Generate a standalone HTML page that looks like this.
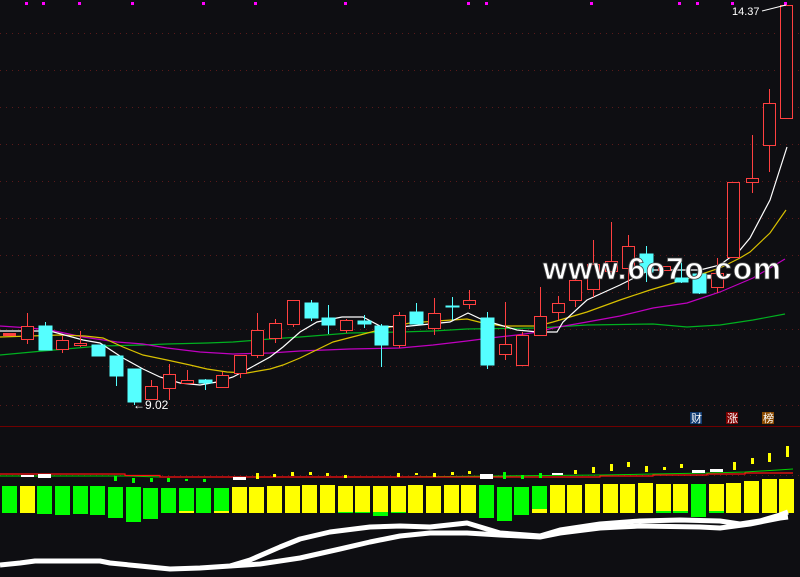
<!DOCTYPE html>
<html><head><meta charset="utf-8"><style>
html,body{margin:0;padding:0;background:#0e0e12;width:800px;height:577px;overflow:hidden}
svg{display:block}
</style></head><body>
<svg width="800" height="577" viewBox="0 0 800 577" xmlns="http://www.w3.org/2000/svg" font-family="Liberation Sans, sans-serif">
<rect width="800" height="577" fill="#0e0e12"/>
<g stroke="#5a1a1a" stroke-width="1" stroke-dasharray="1,5">
<line x1="0" y1="33.5" x2="800" y2="33.5"/><line x1="0" y1="70.5" x2="800" y2="70.5"/>
<line x1="0" y1="107.5" x2="800" y2="107.5"/><line x1="0" y1="144.5" x2="800" y2="144.5"/>
<line x1="0" y1="181.5" x2="800" y2="181.5"/><line x1="0" y1="218.5" x2="800" y2="218.5"/>
<line x1="0" y1="255.5" x2="800" y2="255.5"/><line x1="0" y1="292.5" x2="800" y2="292.5"/>
<line x1="0" y1="329.5" x2="800" y2="329.5"/><line x1="0" y1="366.5" x2="800" y2="366.5"/>
<line x1="0" y1="405.5" x2="800" y2="405.5"/><line x1="0" y1="475.5" x2="800" y2="475.5"/>
</g>
<g fill="#ff00ff">
<rect x="25" y="2" width="3" height="3"/><rect x="42" y="2" width="3" height="3"/><rect x="78" y="2" width="3" height="3"/><rect x="131" y="2" width="3" height="3"/><rect x="202" y="2" width="3" height="3"/><rect x="254" y="2" width="3" height="3"/><rect x="344" y="2" width="3" height="3"/><rect x="467" y="2" width="3" height="3"/><rect x="485" y="2" width="3" height="3"/><rect x="590" y="2" width="3" height="3"/><rect x="678" y="2" width="3" height="3"/><rect x="696" y="2" width="3" height="3"/><rect x="731" y="2" width="3" height="3"/><rect x="784" y="2" width="3" height="3"/>
</g>
<g fill="none" stroke-width="1.2">
<polyline stroke="#00b020" points="0,355 43,351 77,348 100,346 143,345 167,344 207,343 233,342 270,339 300,337 350,333 400,332 433,331 467,329 538,328 587,325 653,324 687,327 720,325 753,320 785,314"/>
<polyline stroke="#c000c0" points="0,326 30,328 50,330 83,337 117,342 143,344 167,348 200,352 233,354 270,353 300,351 350,349 400,348 433,345 467,341 490,338 517,335 538,332 553,328 587,322 620,316 653,308 687,303 720,292 753,278 785,259"/>
<polyline stroke="#d8c000" points="0,337 30,336 60,335 85,336 103,338 123,347 143,355 167,360 190,365 207,369 227,372 247,373 270,369 283,365 300,358 333,342 360,335 390,327 410,323 437,321 467,319 483,323 503,326 538,326 553,322 587,312 620,300 650,290 690,278 720,268 740,258 750,252 770,233 786,210"/>
<polyline stroke="#ffffff" points="0,331 50,331 83,340 100,343 123,358 143,369 160,377 180,383 200,385 217,382 233,377 250,368 270,357 283,347 300,332 317,322 342,317 363,317 380,326 400,327 420,325 450,322 468,313 483,320 500,325 517,330 538,332 557,332 563,322 587,300 620,285 650,270 700,270 720,265 740,250 750,238 770,200 787,147"/>
</g>
<g stroke="#ff4040" fill="#0e0e12" stroke-width="1.3" shape-rendering="crispEdges">
<rect x="3.5" y="333.5" width="12" height="2" fill="#ff4040"/>
<line x1="27.5" y1="313" x2="27.5" y2="344"/><rect x="21.5" y="326.5" width="12" height="13"/>
<line x1="62.5" y1="336" x2="62.5" y2="353"/><rect x="56.5" y="340.5" width="12" height="9"/>
<line x1="80.5" y1="331" x2="80.5" y2="347"/><rect x="74.5" y="343.5" width="12" height="2"/>
<line x1="151.5" y1="380" x2="151.5" y2="399"/><rect x="145.5" y="386.5" width="12" height="13"/>
<line x1="169.5" y1="364" x2="169.5" y2="400"/><rect x="163.5" y="374.5" width="12" height="14"/>
<line x1="187.5" y1="370" x2="187.5" y2="383"/><rect x="181.5" y="380.5" width="12" height="3"/>
<line x1="222.5" y1="372" x2="222.5" y2="387"/><rect x="216.5" y="375.5" width="12" height="12"/>
<line x1="240.5" y1="355" x2="240.5" y2="378"/><rect x="234.5" y="355.5" width="12" height="18"/>
<line x1="257.5" y1="313" x2="257.5" y2="358"/><rect x="251.5" y="330.5" width="12" height="25"/>
<line x1="275.5" y1="319" x2="275.5" y2="343"/><rect x="269.5" y="323.5" width="12" height="15"/>
<line x1="293.5" y1="300" x2="293.5" y2="327"/><rect x="287.5" y="300.5" width="12" height="24"/>
<line x1="346.5" y1="319" x2="346.5" y2="333"/><rect x="340.5" y="320.5" width="12" height="10"/>
<line x1="399.5" y1="312" x2="399.5" y2="348"/><rect x="393.5" y="315.5" width="12" height="30"/>
<line x1="434.5" y1="298" x2="434.5" y2="335"/><rect x="428.5" y="313.5" width="12" height="15"/>
<line x1="469.5" y1="290" x2="469.5" y2="309"/><rect x="463.5" y="300.5" width="12" height="4"/>
<line x1="505.5" y1="302" x2="505.5" y2="360"/><rect x="499.5" y="344.5" width="12" height="10"/>
<line x1="522.5" y1="332" x2="522.5" y2="365"/><rect x="516.5" y="335.5" width="12" height="30"/>
<line x1="540.5" y1="287" x2="540.5" y2="335"/><rect x="534.5" y="316.5" width="12" height="19"/>
<line x1="558.5" y1="296" x2="558.5" y2="320"/><rect x="552.5" y="303.5" width="12" height="9"/>
<line x1="575.5" y1="273" x2="575.5" y2="307"/><rect x="569.5" y="280.5" width="12" height="20"/>
<line x1="593.5" y1="240" x2="593.5" y2="297"/><rect x="587.5" y="264.5" width="12" height="25"/>
<line x1="611.5" y1="222" x2="611.5" y2="275"/><rect x="605.5" y="261.5" width="12" height="10"/>
<line x1="628.5" y1="235" x2="628.5" y2="290"/><rect x="622.5" y="246.5" width="12" height="22"/>
<rect x="658.5" y="266.5" width="12" height="4"/>
<line x1="717.5" y1="258" x2="717.5" y2="293"/><rect x="711.5" y="273.5" width="12" height="14"/>
<rect x="727.5" y="182.5" width="12" height="75"/>
<line x1="752.5" y1="135" x2="752.5" y2="193"/><rect x="746.5" y="178.5" width="12" height="4"/>
<line x1="769.5" y1="89" x2="769.5" y2="172"/><rect x="763.5" y="103.5" width="12" height="42"/>
<rect x="780.5" y="5.5" width="12" height="113"/>
</g>
<g stroke="#55ffff" fill="#55ffff" stroke-width="1">
<line x1="45.5" y1="322" x2="45.5" y2="350"/><rect x="39" y="326" width="13" height="24"/>
<rect x="92" y="345" width="13" height="11"/>
<line x1="116.5" y1="356" x2="116.5" y2="386"/><rect x="110" y="356" width="13" height="20"/>
<line x1="134.5" y1="369" x2="134.5" y2="405"/><rect x="128" y="369" width="13" height="33"/>
<line x1="205.5" y1="379" x2="205.5" y2="390"/><rect x="199" y="380" width="13" height="3"/>
<line x1="311.5" y1="300" x2="311.5" y2="321"/><rect x="305" y="303" width="13" height="15"/>
<line x1="328.5" y1="305" x2="328.5" y2="334"/><rect x="322" y="318" width="13" height="7"/>
<line x1="364.5" y1="315" x2="364.5" y2="328"/><rect x="358" y="321" width="13" height="3"/>
<line x1="381.5" y1="324" x2="381.5" y2="367"/><rect x="375" y="326" width="13" height="19"/>
<line x1="416.5" y1="303" x2="416.5" y2="324"/><rect x="410" y="312" width="13" height="12"/>
<line x1="452.5" y1="297" x2="452.5" y2="320"/><rect x="446" y="306" width="13" height="1"/>
<line x1="487.5" y1="312" x2="487.5" y2="369"/><rect x="481" y="318" width="13" height="47"/>
<line x1="646.5" y1="246" x2="646.5" y2="282"/><rect x="640" y="254" width="13" height="18"/>
<line x1="681.5" y1="258" x2="681.5" y2="283"/><rect x="675" y="278" width="13" height="4"/>
<line x1="699.5" y1="274" x2="699.5" y2="294"/><rect x="693" y="274" width="13" height="19"/>
</g>
<text x="732" y="15" fill="#ffffff" font-size="11">14.37</text>
<line x1="762" y1="11" x2="786" y2="5" stroke="#fff" stroke-width="1"/>
<text x="133" y="409" fill="#ffffff" font-size="12">←9.02</text>
<text x="543" y="279" fill="#ffffff" font-size="31" font-weight="bold" letter-spacing="1.2" stroke="#444" stroke-width="0.8">www.6o7o.com</text>
<line x1="0" y1="426.5" x2="800" y2="426.5" stroke="#700000"/>
<rect x="690" y="412" width="12" height="12" fill="#103a70"/><text x="691" y="422" fill="#fff" font-size="11" font-family="Noto Sans CJK SC, sans-serif">财</text>
<rect x="726" y="412" width="12" height="12" fill="#800000"/><text x="727" y="422" fill="#fff" font-size="11" font-family="Noto Sans CJK SC, sans-serif">涨</text>
<rect x="762" y="412" width="12" height="12" fill="#8a4a00"/><text x="763" y="422" fill="#fff" font-size="11" font-family="Noto Sans CJK SC, sans-serif">榜</text>
<polyline fill="none" stroke="#00d000" points="0,476 125,476 160,477 213,477 400,477 600,475 653,474 707,473 745,472 778,470 793,469"/>
<polyline fill="none" stroke="#ff1010" stroke-width="1.2" points="0,474 125,474 125,475.5 160,475.5 160,477 600,477 600,476 653,476 653,475 707,475 707,474 745,474 745,473 793,473"/>
<g fill="#00ff00">
<rect x="2" y="486" width="15" height="27"/><rect x="37" y="486" width="15" height="28"/><rect x="55" y="486" width="15" height="29"/><rect x="73" y="486" width="15" height="28"/><rect x="90" y="486" width="15" height="29"/><rect x="108" y="487" width="15" height="31"/><rect x="126" y="487" width="15" height="35"/><rect x="143" y="488" width="15" height="31"/><rect x="161" y="488" width="15" height="25"/><rect x="179" y="488" width="15" height="25"/><rect x="196" y="488" width="15" height="25"/><rect x="214" y="488" width="15" height="25"/>
<rect x="373" y="512" width="15" height="4"/><rect x="338" y="512" width="15" height="1"/><rect x="355" y="512" width="15" height="1"/><rect x="391" y="512" width="15" height="1"/>
<rect x="479" y="485" width="15" height="33"/><rect x="497" y="487" width="15" height="34"/><rect x="514" y="487" width="15" height="28"/><rect x="532" y="486" width="15" height="25"/><rect x="656" y="511" width="15" height="2"/><rect x="673" y="511" width="15" height="2"/><rect x="691" y="484" width="15" height="33"/><rect x="709" y="511" width="15" height="2"/>
</g>
<g fill="#ffff00">
<rect x="20" y="486" width="15" height="27"/><rect x="179" y="511" width="15" height="2"/><rect x="214" y="511" width="15" height="2"/>
<rect x="232" y="487" width="15" height="26"/><rect x="249" y="487" width="15" height="26"/><rect x="267" y="486" width="15" height="27"/><rect x="285" y="486" width="15" height="27"/><rect x="302" y="485" width="15" height="28"/><rect x="320" y="485" width="15" height="28"/><rect x="338" y="486" width="15" height="26"/><rect x="355" y="486" width="15" height="26"/><rect x="373" y="486" width="15" height="26"/><rect x="391" y="486" width="15" height="26"/>
<rect x="408" y="485" width="15" height="28"/><rect x="426" y="486" width="15" height="27"/><rect x="444" y="485" width="15" height="28"/><rect x="461" y="485" width="15" height="28"/><rect x="532" y="509" width="15" height="4"/>
<rect x="550" y="485" width="15" height="28"/><rect x="567" y="485" width="15" height="28"/><rect x="585" y="484" width="15" height="29"/><rect x="603" y="484" width="15" height="29"/><rect x="620" y="484" width="15" height="29"/><rect x="638" y="483" width="15" height="30"/><rect x="656" y="484" width="15" height="27"/><rect x="673" y="484" width="15" height="27"/><rect x="709" y="484" width="15" height="27"/><rect x="726" y="483" width="15" height="30"/><rect x="744" y="481" width="15" height="32"/><rect x="762" y="479" width="15" height="34"/><rect x="779" y="479" width="15" height="34"/>
</g>
<g fill="#ffff00">
<rect x="256" y="473" width="3" height="6"/><rect x="273" y="474" width="3" height="3"/><rect x="291" y="472" width="3" height="4"/><rect x="309" y="472" width="3" height="3"/><rect x="326" y="473" width="3" height="3"/><rect x="344" y="475" width="3" height="3"/><rect x="397" y="473" width="3" height="4"/><rect x="415" y="473" width="3" height="2"/><rect x="433" y="473" width="3" height="4"/><rect x="451" y="472" width="3" height="3"/><rect x="468" y="471" width="3" height="3"/><rect x="574" y="470" width="3" height="4"/><rect x="592" y="467" width="3" height="6"/><rect x="610" y="464" width="3" height="7"/><rect x="627" y="462" width="3" height="5"/><rect x="645" y="466" width="3" height="6"/><rect x="663" y="467" width="3" height="3"/><rect x="680" y="464" width="3" height="4"/><rect x="733" y="462" width="3" height="8"/><rect x="751" y="458" width="3" height="6"/><rect x="768" y="453" width="3" height="9"/><rect x="786" y="446" width="3" height="11"/>
</g>
<g fill="#ffffff">
<rect x="21" y="475" width="13" height="2"/><rect x="38" y="474" width="13" height="4"/><rect x="233" y="477" width="13" height="3"/><rect x="480" y="474" width="13" height="5"/><rect x="552" y="473" width="11" height="2"/><rect x="692" y="470" width="13" height="3"/><rect x="710" y="469" width="13" height="3"/>
</g>
<g fill="#00ff00">
<rect x="114" y="476" width="3" height="5"/><rect x="132" y="478" width="3" height="5"/><rect x="150" y="478" width="3" height="4"/><rect x="167" y="478" width="3" height="4"/><rect x="185" y="479" width="3" height="2"/><rect x="203" y="479" width="3" height="3"/><rect x="503" y="472" width="3" height="7"/><rect x="521" y="475" width="3" height="4"/><rect x="539" y="473" width="3" height="5"/>
</g>
<g fill="none" stroke="#ffffff" stroke-width="5" stroke-linejoin="round">
<polyline points="0,565 20,563 35,561 100,561 110,563 140,566 170,569 200,568 230,566 250,560 280,547 300,539 330,532 370,527 400,526 430,527 467,523 500,533 540,536 560,530 600,524 640,521 680,520 720,521 740,524 760,521 780,515 788,512"/>
<polyline points="230,566 260,564 300,558 340,549 370,542 400,536 430,533 467,533 500,535 540,537 560,533 600,528 640,526 700,527 720,528 750,524 780,518 788,517"/>
</g>
</svg>
</body></html>
